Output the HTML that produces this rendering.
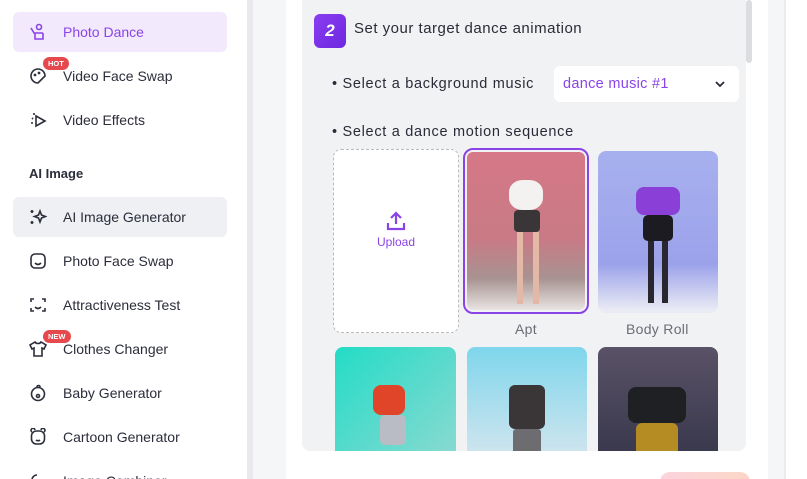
<!DOCTYPE html>
<html><head><meta charset="utf-8"><style>
*{box-sizing:border-box;margin:0;padding:0}
html,body{width:807px;height:479px;overflow:hidden}
body{background:#fff;font-family:"Liberation Sans",sans-serif;position:relative}
.side{position:absolute;left:0;top:0;width:247px;height:479px;background:#fff}
.sb{position:absolute;left:247px;top:0;width:6px;height:479px;background:#e9e9ec}
.item{position:absolute;left:13px;width:214px;height:40px;border-radius:6px;display:flex;align-items:center;padding-left:50px;font-size:14px;color:#2b2d3a}
.item svg{position:absolute;left:16px;top:11px}
.badge{position:absolute;left:30px;top:1px;background:#e5484d;color:#fff;font-size:7.5px;font-weight:bold;padding:2px 5px;border-radius:7px}
.main{position:absolute;left:253px;top:0;width:554px;height:479px;background:#f5f6f8}
.card{position:absolute;left:33px;top:0;width:482px;height:479px;background:#fff}
.panel{position:absolute;left:49px;top:0;width:444px;height:451px;background:#f1f2f4;border-radius:0 0 8px 8px;overflow:hidden}
.rline{position:absolute;left:531px;top:0;width:2px;height:479px;background:#ececef}
.rw{position:absolute;left:533px;top:0;width:21px;height:479px;background:#fff}
.thumb{position:absolute;left:493px;top:0;width:6px;height:63px;background:#dcdde1;border-radius:3px}
.t{position:absolute;font-size:14.5px;color:#2a2b38;letter-spacing:0.7px;white-space:nowrap}
.img{position:absolute;border-radius:8px;overflow:hidden}
.fig{position:absolute;border-radius:40%}
</style></head><body>
<div class="side">
 <div class="item" style="top:12px;background:#f2e9fd;color:#8a44e6"><svg width="18" height="18" viewBox="0 0 18 18" fill="none" stroke="#8a44e6" stroke-width="1.6"><circle cx="10" cy="4" r="2.5"/><path d="M2 5l3 5h9M6 10v6h8v-6"/></svg>Photo Dance</div>
 <div class="item" style="top:56px"><span class="badge">HOT</span><svg width="18" height="18" viewBox="0 0 18 18" fill="none" stroke="#2b2d3a" stroke-width="1.6"><path d="M16 9A7 7 0 1 0 9 16l7-7z"/><circle cx="6" cy="8" r=".6"/><circle cx="10" cy="6" r=".6"/></svg>Video Face Swap</div>
 <div class="item" style="top:100px"><svg width="18" height="18" viewBox="0 0 18 18" fill="none" stroke="#2b2d3a" stroke-width="1.6"><path d="M7 5l9 5-9 5z"/><path d="M3 7l1 1M2 12h2M5 2v2"/></svg>Video Effects</div>
 <div style="position:absolute;left:29px;top:166px;font-size:13px;font-weight:bold;color:#2b2d3a">AI Image</div>
 <div class="item" style="top:197px;background:#eef0f3"><svg width="18" height="18" viewBox="0 0 18 18" fill="none" stroke="#2b2d3a" stroke-width="1.6"><path d="M11 3l1.5 4 4 1.5-4 1.5-1.5 4-1.5-4-4-1.5 4-1.5z"/><path d="M3 2v3M1.5 3.5h3M3 13v3M1.5 14.5h3"/></svg>AI Image Generator</div>
 <div class="item" style="top:241px"><svg width="18" height="18" viewBox="0 0 18 18" fill="none" stroke="#2b2d3a" stroke-width="1.6"><rect x="2" y="2" width="14" height="14" rx="4"/><path d="M6 11c2 2 4 2 6 0"/></svg>Photo Face Swap</div>
 <div class="item" style="top:285px"><svg width="18" height="18" viewBox="0 0 18 18" fill="none" stroke="#2b2d3a" stroke-width="1.6"><path d="M2 6V3h3M13 3h3v3M16 12v3h-3M5 15H2v-3M6 11c2 2 4 2 6 0"/></svg>Attractiveness Test</div>
 <div class="item" style="top:329px"><span class="badge">NEW</span><svg width="18" height="18" viewBox="0 0 18 18" fill="none" stroke="#2b2d3a" stroke-width="1.6"><path d="M6 2L1 5l2 4 2-1v8h8V8l2 1 2-4-5-3c-1 2-5 2-6 0z"/></svg>Clothes Changer</div>
 <div class="item" style="top:373px"><svg width="18" height="18" viewBox="0 0 18 18" fill="none" stroke="#2b2d3a" stroke-width="1.6"><circle cx="9" cy="10" r="6.5"/><path d="M8 3c0-2 3-2 3 0"/><circle cx="9" cy="12" r="1.5"/></svg>Baby Generator</div>
 <div class="item" style="top:417px"><svg width="18" height="18" viewBox="0 0 18 18" fill="none" stroke="#2b2d3a" stroke-width="1.6"><rect x="2.5" y="3" width="13" height="13" rx="5"/><path d="M3 4a2 2 0 1 1 3-2M15 4a2 2 0 1 0-3-2M7 12c1 1 3 1 4 0"/></svg>Cartoon Generator</div>
 <div class="item" style="top:461px"><svg width="18" height="18" viewBox="0 0 18 18" fill="none" stroke="#2b2d3a" stroke-width="1.6"><path d="M3 16V8a5 5 0 0 1 5-5"/></svg>Image Combiner</div>
</div>
<div class="sb"></div>
<div class="main">
 <div class="card"></div>
 <div class="rline"></div><div class="rw"></div>
 <div class="panel">
  <div style="position:absolute;left:12px;top:14px;width:32px;height:34px;border-radius:6px;background:linear-gradient(135deg,#8a3df0,#6d28e0);color:#fff;font-weight:bold;font-style:italic;font-size:17px;text-align:center;line-height:34px">2</div>
  <div class="t" style="left:52px;top:20px;font-size:15px;letter-spacing:0.5px">Set your target dance animation</div>
  <div class="t" style="left:30px;top:76px">• Select a background music</div>
  <div style="position:absolute;left:252px;top:66px;width:185px;height:36px;background:#fff;border-radius:6px;color:#8a44e6;font-size:14.5px;padding:10px 9px;letter-spacing:0.3px">dance music #1<svg style="position:absolute;right:14px;top:14px" width="10" height="8" viewBox="0 0 10 8" fill="none" stroke="#2a2b38" stroke-width="1.8"><path d="M1 2l4 4 4-4"/></svg></div>
  <div class="t" style="left:30px;top:124px">• Select a dance motion sequence</div>
  <div style="position:absolute;left:31px;top:149px;width:126px;height:184px;border:1.5px dashed #bbb;border-radius:8px;background:#fff;text-align:center;color:#8a44e6;font-size:12px;padding-top:60px">
   <svg width="22" height="22" viewBox="0 0 22 22" fill="none" stroke="#8a44e6" stroke-width="2.2"><path d="M11 14V3M6 8l5-5 5 5M3 13v6h16v-6"/></svg><br><span style="position:relative;top:0px">Upload</span></div>
  <div style="position:absolute;left:161px;top:148px;width:126px;height:166px;border:2.5px solid #8a44e6;border-radius:10px;padding:2px">
   <div style="position:relative;width:100%;height:100%;border-radius:6px;overflow:hidden;background:linear-gradient(180deg,#d67887 0%,#c87a85 55%,#a89391 80%,#e8e4e2 100%)">
    <div class="fig" style="left:42px;top:28px;width:34px;height:30px;background:#f4f2f0"></div>
    <div class="fig" style="left:47px;top:58px;width:26px;height:22px;background:#3a3638;border-radius:4px"></div>
    <div style="position:absolute;left:50px;top:80px;width:22px;height:72px;border-left:6px solid #e3b8a6;border-right:6px solid #e3b8a6"></div>
   </div></div>
  <div class="img" style="left:296px;top:151px;width:120px;height:162px;background:linear-gradient(180deg,#a7b0ef,#9ca2ea 70%,#e9eaf4 98%)">
   <div class="fig" style="left:38px;top:36px;width:44px;height:28px;background:#8a3fd6;border-radius:8px"></div>
   <div class="fig" style="left:45px;top:64px;width:30px;height:26px;background:#1d1b22;border-radius:5px"></div>
   <div style="position:absolute;left:50px;top:90px;width:20px;height:62px;border-left:6px solid #2a2630;border-right:6px solid #2a2630"></div>
  </div>
  <div class="t" style="left:213px;top:321px;color:#6b6c76;font-size:14px;letter-spacing:0.3px">Apt</div>
  <div class="t" style="left:324px;top:321px;color:#6b6c76;font-size:14px;letter-spacing:0.3px">Body Roll</div>
  <div class="img" style="left:33px;top:347px;width:121px;height:120px;background:linear-gradient(135deg,#23dcc6,#8fd9d2)">
   <div class="fig" style="left:38px;top:38px;width:32px;height:30px;background:#e0452a;border-radius:8px"></div>
   <div class="fig" style="left:45px;top:68px;width:26px;height:30px;background:#b9bcc4;border-radius:5px"></div>
  </div>
  <div class="img" style="left:165px;top:347px;width:120px;height:120px;background:linear-gradient(180deg,#7fd6ec,#d8e6ee)">
   <div class="fig" style="left:42px;top:38px;width:36px;height:44px;background:#3a3638;border-radius:6px"></div>
   <div class="fig" style="left:46px;top:82px;width:28px;height:40px;background:#6d6c70;border-radius:3px"></div>
  </div>
  <div class="img" style="left:296px;top:347px;width:120px;height:120px;background:linear-gradient(180deg,#5a5266,#35354a)">
   <div class="fig" style="left:30px;top:40px;width:58px;height:36px;background:#1e2024;border-radius:8px"></div>
   <div class="fig" style="left:38px;top:76px;width:42px;height:40px;background:#b58b24;border-radius:6px"></div>
  </div>
 </div>
 <div class="thumb"></div>
 <div style="position:absolute;left:407px;top:472px;width:90px;height:20px;border-radius:10px;background:linear-gradient(90deg,#fbd4dd,#fbd6c6)"></div>
</div>
</body></html>
